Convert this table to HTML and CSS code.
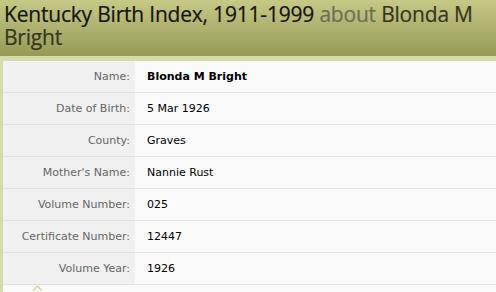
FILE: index.html
```html
<!DOCTYPE html>
<html>
<head>
<meta charset="utf-8">
<link rel="stylesheet" href="styles.css">
</head>
<body>
<div class="page">
  <header class="head">
    <h1 class="title">Kentucky Birth Index, 1911-1999 <span class="about">about</span> <span class="who">Blonda M Bright</span></h1>
  </header>
  <div class="body">
    <table class="rec">
      <tr><th>Name:</th><td><b>Blonda M Bright</b></td></tr>
      <tr><th>Date of Birth:</th><td>5 Mar 1926</td></tr>
      <tr><th>County:</th><td>Graves</td></tr>
      <tr><th>Mother's Name:</th><td>Nannie Rust</td></tr>
      <tr><th>Volume Number:</th><td>025</td></tr>
      <tr><th>Certificate Number:</th><td>12447</td></tr>
      <tr><th>Volume Year:</th><td>1926</td></tr>
    </table>
    <div class="foot"><span class="caret"></span></div>
  </div>
</div>
</body>
</html>
```
FILE: styles.css
```css
html, body { margin: 0; padding: 0; background: #fafafa; }
.page { width: 496px; overflow: hidden; }
.head {
  background: linear-gradient(#c6c886, #969a57);
  height: 56px;
  padding: 0 0 0 4px;
  box-sizing: border-box;
}
.title {
  margin: 0;
  font-family: "Open Sans", "DejaVu Sans", sans-serif;
  font-weight: normal;
  font-size: 21px;
  line-height: 23px;
  padding-top: 3px;
  color: #141408;
  letter-spacing: -0.2px;
  -webkit-text-stroke: 0.2px currentColor;
}
.about { color: #6e6e58; }
.who { color: #36361e; }
.body {
  border-top: 5px solid #d6dba8;
  border-left: 3px solid #d6dba8;
  background: #fafafa;
}
.rec {
  width: 100%;
  border-collapse: collapse;
  font-family: "DejaVu Sans", sans-serif;
  font-size: 11px;
}
.rec th, .rec td {
  height: 31px;
  padding: 0;
  border-bottom: 1px solid #e2e2e2;
  vertical-align: middle;
}
.rec th {
  width: 132px;
  background: #f0f0f0;
  color: #666;
  font-weight: normal;
  text-align: right;
  padding-right: 5px;
  box-sizing: border-box;
}
.rec td {
  color: #000;
  padding-left: 12px;
}
.rec td b { font-weight: bold; }
.foot { height: 10px; position: relative; background: #fafafa; }
.caret {
  position: absolute;
  left: 31px; top: 2px;
  width: 6px; height: 6px;
  border-left: 1px solid #e8c070;
  border-top: 1px solid #e8c070;
  transform: rotate(45deg);
}
```
